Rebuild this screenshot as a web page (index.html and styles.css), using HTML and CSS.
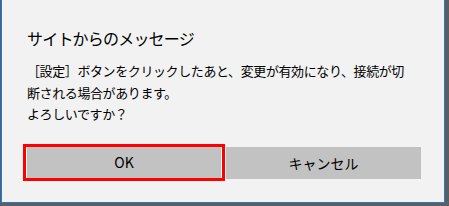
FILE: index.html
```html
<!DOCTYPE html>
<html lang="ja">

<head>
  <meta charset="UTF-8">
  <meta name="viewport" content="width=device-width, initial-scale=1.0">
  <title>サイトからのメッセージ</title>
  <link rel="stylesheet" href="styles.css">
</head>

<body>
  <div class="dialog">
    <h1 class="dialog-title">サイトからのメッセージ</h1>
    <p class="dialog-message">［設定］ボタンをクリックしたあと、変更が有効になり、接続が切断される場合があります。<br>よろしいですか？</p>
    <div class="dialog-buttons">
      <button class="btn btn-focus">OK</button>
      <button class="btn">キャンセル</button>
    </div>
  </div>
</body>

</html>
```

FILE: styles.css
```css
* {
  box-sizing: border-box;
  margin: 0;
  padding: 0;
}

body {
  font-family: "Noto Sans CJK JP", "Noto Sans", sans-serif;
  background: #5e5e5e;
  width: 449px;
  height: 206px;
  overflow: hidden;
}

.dialog {
  margin-left: 1px;
  width: 444px;
  height: 203px;
  background: #f2f2f2;
  border: 1px solid #1a7fd4;
  border-top: none;
  padding: 26px 22px 0 25px;
  color: #000;
}

.dialog-title {
  font-size: 16px;
  font-weight: normal;
  line-height: 24px;
  letter-spacing: -0.8px;
}

.dialog-message {
  margin-top: 10px;
  width: 385px;
  font-size: 13px;
  line-height: 21.5px;
  letter-spacing: -0.4px;
}

.dialog-buttons {
  display: flex;
  gap: 4px;
  margin-top: 22px;
  margin-left: -1px;
}

.btn {
  width: 195px;
  height: 32px;
  border: none;
  background: #c2c2c2;
  font-family: inherit;
  font-size: 14px;
  color: #000;
}

/* focused button, as the system dialog draws it */
.btn-focus {
  width: 196px;
  height: 31px;
  outline: 3px solid #ff0000;
  box-shadow: inset 1px 0 #fff, inset -1px 0 #fff;
}
```
